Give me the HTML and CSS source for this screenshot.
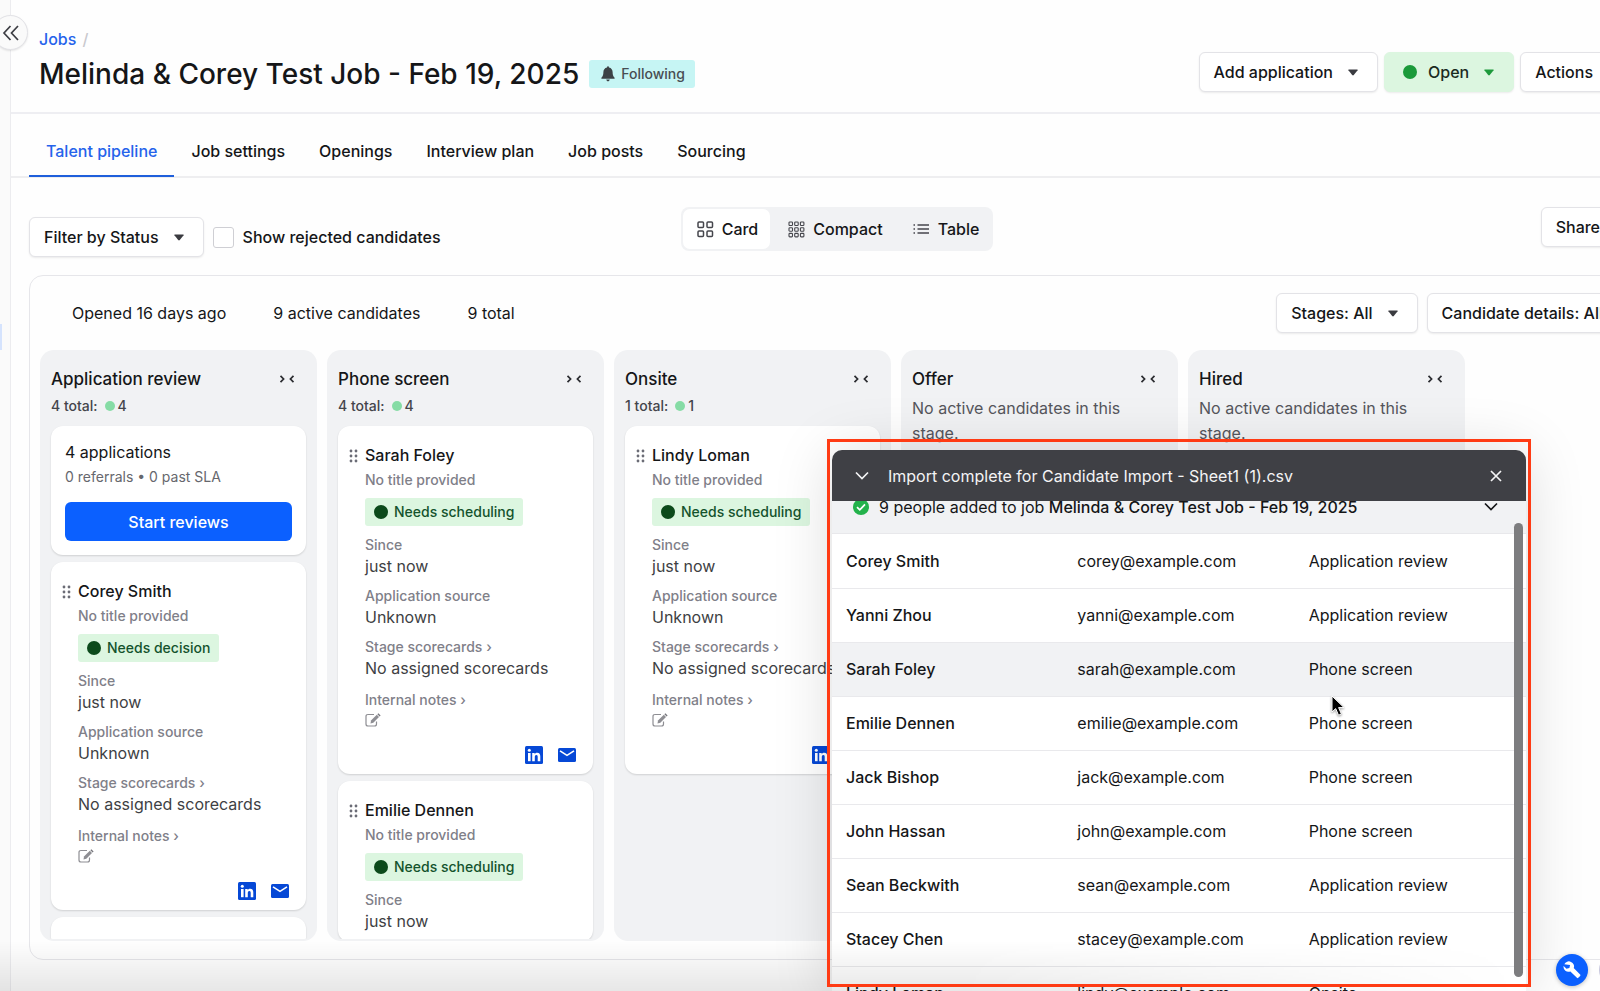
FILE: index.html
```html
<!DOCTYPE html>
<html lang="en">
<head>
<meta charset="utf-8">
<title>Melinda &amp; Corey Test Job - Feb 19, 2025</title>
<link rel="stylesheet" href="styles.css">
</head>
<body>
<svg class="sprite" aria-hidden="true">
  <symbol id="caret" viewBox="0 0 10 7"><path d="M0.8 0.5h8.4q0.8 0 0.4 0.8L5.8 6q-0.8 0.9-1.6 0L0.4 1.3Q0 0.5 0.8 0.5z" fill="currentColor"/></symbol>
  <symbol id="collapse" viewBox="0 0 16 10"><path d="M1.500 1.800L4.600 5L1.500 8.200M14.500 1.800L11.400 5l3.100 3.200" fill="none" stroke="currentColor" stroke-width="1.7"/></symbol>
  <symbol id="grip" viewBox="0 0 9 14"><g fill="currentColor"><circle cx="2" cy="2" r="1.4"/><circle cx="7" cy="2" r="1.4"/><circle cx="2" cy="7" r="1.4"/><circle cx="7" cy="7" r="1.4"/><circle cx="2" cy="12" r="1.4"/><circle cx="7" cy="12" r="1.4"/></g></symbol>
  <symbol id="edit" viewBox="0 0 16 14"><path d="M9 1.5H3Q1 1.5 1 3.500V11q0 2 2 2h6.500q2 0 2-2V8.500" fill="none" stroke="#8e8e93" stroke-width="1.2"/><path d="M5.500 10.500L6 7.600L11.800 1.800L14 4L8.300 9.800z" fill="#8e8e93"/><path d="M12.400 1.200l1-1 2.200 2.200-1 1z" fill="#77777d"/></symbol>
  <symbol id="linkedin" viewBox="0 0 18 18"><rect width="18" height="18" rx="1.5" fill="#0648d6"/><g fill="#fff"><circle cx="4.300" cy="4.200" r="1.500"/><rect x="3" y="7" width="2.600" height="8.200"/><path d="M7.200 7h2.500v1.200C10.300 7.200 11.200 6.800 12.200 6.800c2.300 0 3.100 1.500 3.100 3.700v4.700h-2.600v-4.200c0-1.200-.3-2-1.300-2-1.100 0-1.600.8-1.600 2v4.200H7.200z"/></g></symbol>
  <symbol id="mail" viewBox="0 0 18 14"><rect width="18" height="14" rx="1.5" fill="#0648d6"/><path d="M2 2.800L9 7.300L16 2.800" fill="none" stroke="#fff" stroke-width="1.600"/></symbol>
  <symbol id="chevron" viewBox="0 0 14 9"><path d="M1 1.500L7 7.500L13 1.500" fill="none" stroke="currentColor" stroke-width="1.700"/></symbol>
</svg>

<div class="app">
  <aside class="rail"><span class="rail-active"></span>
    <button class="rail-toggle" aria-label="Collapse sidebar"><svg width="18" height="16" viewBox="0 0 18 16"><path d="M8.500 1L2 8l6.500 7M16 1L9.500 8L16 15" fill="none" stroke="#3c3d43" stroke-width="1.700"/></svg></button>
  </aside>
  <main class="main">
    <header class="page-head">
      <div>
        <nav class="crumbs" aria-label="Breadcrumb"><a href="#">Jobs</a><span>/</span></nav>
        <div class="title-row">
          <h1>Melinda &amp; Corey Test Job - Feb 19, 2025</h1>
          <button class="following"><svg width="14" height="16" viewBox="0 0 14 16"><path d="M7 0.300q1 0 1 1.100c2.400.5 3.600 2.400 3.600 4.600 0 3 .7 4.700 2 5.800v1H0.400v-1C1.700 10.700 2.400 9 2.400 6c0-2.200 1.200-4.100 3.600-4.600q0-1.100 1-1.100zM5.200 13.600h3.600Q8.500 15.400 7 15.400T5.200 13.600z" fill="#3c4246"/></svg>Following</button>
        </div>
      </div>
      <div class="head-actions">
        <button class="btn">Add application<svg class="caret"><use href="#caret"/></svg></button>
        <button class="btn btn-open"><i class="open-dot"></i>Open<svg class="caret"><use href="#caret"/></svg></button>
        <button class="btn">Actions<svg class="caret"><use href="#caret"/></svg></button>
      </div>
    </header>

    <nav class="tabs" aria-label="Job sections">
      <a class="active" href="#">Talent pipeline</a><a href="#">Job settings</a><a href="#">Openings</a><a href="#">Interview plan</a><a href="#">Job posts</a><a href="#">Sourcing</a>
    </nav>

    <div class="toolbar">
      <div class="filters">
        <button class="btn">Filter by Status<svg class="caret"><use href="#caret"/></svg></button>
        <label class="check"><input type="checkbox">Show rejected candidates</label>
      </div>
      <div class="segmented">
        <button class="on"><svg width="17" height="17" viewBox="0 0 17 17"><g fill="none" stroke="currentColor" stroke-width="1.500"><rect x="1" y="1" width="5.500" height="5.500" rx="1"/><rect x="10" y="1" width="5.500" height="5.500" rx="1"/><rect x="1" y="10" width="5.500" height="5.500" rx="1"/><rect x="10" y="10" width="5.500" height="5.500" rx="1"/></g></svg>Card</button>
        <button><svg width="17" height="17" viewBox="0 0 17 17"><g fill="none" stroke="currentColor" stroke-width="1.100"><rect x="1" y="1" width="3.500" height="3.500" rx=".8"/><rect x="6.700" y="1" width="3.500" height="3.500" rx=".8"/><rect x="12.400" y="1" width="3.500" height="3.500" rx=".8"/><rect x="1" y="6.700" width="3.500" height="3.500" rx=".8"/><rect x="6.700" y="6.700" width="3.500" height="3.500" rx=".8"/><rect x="12.400" y="6.700" width="3.500" height="3.500" rx=".8"/><rect x="1" y="12.400" width="3.500" height="3.500" rx=".8"/><rect x="6.700" y="12.400" width="3.500" height="3.500" rx=".8"/><rect x="12.400" y="12.400" width="3.500" height="3.500" rx=".8"/></g></svg>Compact</button>
        <button><svg width="17" height="12" viewBox="0 0 17 12"><path d="M0.500 2h1.500M0.500 6h1.500M0.500 10h1.500M4.500 2H16M4.500 6H16M4.500 10H16" stroke="currentColor" stroke-width="1.500"/></svg>Table</button>
      </div>
      <div class="share"><button class="btn">Share<svg class="caret"><use href="#caret"/></svg></button></div>
    </div>

    <section class="panel">
      <div class="summary">
        <span>Opened 16 days ago</span><span>9 active candidates</span><span>9 total</span>
        <div class="summary-actions">
          <button class="btn">Stages: All<svg class="caret"><use href="#caret"/></svg></button>
          <button class="btn">Candidate details: All<svg class="caret"><use href="#caret"/></svg></button>
        </div>
      </div>
      <div class="board">
        <section class="column">
          <div class="col-head"><h2>Application review</h2><button aria-label="Collapse Application review"><svg><use href="#collapse"/></svg></button></div>
          <p class="count">4 total: <i></i>4</p>
          <article class="card reviews"><h3>4 applications</h3><p>0 referrals • 0 past SLA</p><button>Start reviews</button></article>
          <article class="card">
            <svg class="grip"><use href="#grip"/></svg>
            <div class="card-body">
              <h3>Corey Smith</h3><p class="muted">No title provided</p><span class="status"><i></i>Needs decision</span>
              <dl><dt>Since</dt><dd>just now</dd><dt>Application source</dt><dd>Unknown</dd><dt>Stage scorecards ›</dt><dd>No assigned scorecards</dd><dt class="notes">Internal notes ›</dt><dd class="edit"><button aria-label="Edit notes"><svg><use href="#edit"/></svg></button></dd></dl>
              <div class="links"><a href="#" aria-label="LinkedIn"><svg width="18" height="18"><use href="#linkedin"/></svg></a><a href="#" aria-label="Email"><svg width="18" height="14"><use href="#mail"/></svg></a></div>
            </div>
          </article>
          <article class="card blank"></article>
        </section>
        <section class="column">
          <div class="col-head"><h2>Phone screen</h2><button aria-label="Collapse Phone screen"><svg><use href="#collapse"/></svg></button></div>
          <p class="count">4 total: <i></i>4</p>
          <article class="card">
            <svg class="grip"><use href="#grip"/></svg>
            <div class="card-body">
              <h3>Sarah Foley</h3><p class="muted">No title provided</p><span class="status"><i></i>Needs scheduling</span>
              <dl><dt>Since</dt><dd>just now</dd><dt>Application source</dt><dd>Unknown</dd><dt>Stage scorecards ›</dt><dd>No assigned scorecards</dd><dt class="notes">Internal notes ›</dt><dd class="edit"><button aria-label="Edit notes"><svg><use href="#edit"/></svg></button></dd></dl>
              <div class="links"><a href="#" aria-label="LinkedIn"><svg width="18" height="18"><use href="#linkedin"/></svg></a><a href="#" aria-label="Email"><svg width="18" height="14"><use href="#mail"/></svg></a></div>
            </div>
          </article>
          <article class="card">
            <svg class="grip"><use href="#grip"/></svg>
            <div class="card-body">
              <h3>Emilie Dennen</h3><p class="muted">No title provided</p><span class="status"><i></i>Needs scheduling</span>
              <dl><dt>Since</dt><dd>just now</dd></dl>
            </div>
          </article>
        </section>
        <section class="column">
          <div class="col-head"><h2>Onsite</h2><button aria-label="Collapse Onsite"><svg><use href="#collapse"/></svg></button></div>
          <p class="count">1 total: <i></i>1</p>
          <article class="card">
            <svg class="grip"><use href="#grip"/></svg>
            <div class="card-body">
              <h3>Lindy Loman</h3><p class="muted">No title provided</p><span class="status"><i></i>Needs scheduling</span>
              <dl><dt>Since</dt><dd>just now</dd><dt>Application source</dt><dd>Unknown</dd><dt>Stage scorecards ›</dt><dd>No assigned scorecards</dd><dt class="notes">Internal notes ›</dt><dd class="edit"><button aria-label="Edit notes"><svg><use href="#edit"/></svg></button></dd></dl>
              <div class="links"><a href="#" aria-label="LinkedIn"><svg width="18" height="18"><use href="#linkedin"/></svg></a><a href="#" aria-label="Email"><svg width="18" height="14"><use href="#mail"/></svg></a></div>
            </div>
          </article>
        </section>
        <section class="column">
          <div class="col-head"><h2>Offer</h2><button aria-label="Collapse Offer"><svg><use href="#collapse"/></svg></button></div>
          <p class="empty">No active candidates in this stage.</p>
        </section>
        <section class="column">
          <div class="col-head"><h2>Hired</h2><button aria-label="Collapse Hired"><svg><use href="#collapse"/></svg></button></div>
          <p class="empty">No active candidates in this stage.</p>
        </section>
      </div>
    </section>
  </main>
</div>

<section class="import" aria-label="Import results">
  <header class="import-head">
    <button aria-label="Minimize"><svg width="14" height="9"><use href="#chevron"/></svg></button>
    <h2>Import complete for Candidate Import - Sheet1 (1).csv</h2>
    <button aria-label="Close"><svg width="12" height="12" viewBox="0 0 12 12"><path d="M1 1l10 10M11 1L1 11" stroke="currentColor" stroke-width="1.700"/></svg></button>
  </header>
  <div class="import-list">
    <div class="import-summary">
      <svg width="16" height="16" viewBox="0 0 16 16"><circle cx="8" cy="8" r="8" fill="#23b24b"/><path d="M4 8.200l2.800 2.700L12 5.400" fill="none" stroke="#fff" stroke-width="1.700"/></svg>
      <p>9 people added to job <b>Melinda &amp; Corey Test Job - Feb 19, 2025</b></p>
      <svg width="14" height="9"><use href="#chevron"/></svg>
    </div>
    <table>
      <tr><th scope="row">Corey Smith</th><td>corey@example.com</td><td>Application review</td></tr>
      <tr><th scope="row">Yanni Zhou</th><td>yanni@example.com</td><td>Application review</td></tr>
      <tr class="hover"><th scope="row">Sarah Foley</th><td>sarah@example.com</td><td>Phone screen</td></tr>
      <tr><th scope="row">Emilie Dennen</th><td>emilie@example.com</td><td>Phone screen</td></tr>
      <tr><th scope="row">Jack Bishop</th><td>jack@example.com</td><td>Phone screen</td></tr>
      <tr><th scope="row">John Hassan</th><td>john@example.com</td><td>Phone screen</td></tr>
      <tr><th scope="row">Sean Beckwith</th><td>sean@example.com</td><td>Application review</td></tr>
      <tr><th scope="row">Stacey Chen</th><td>stacey@example.com</td><td>Application review</td></tr>
      <tr><th scope="row">Lindy Loman</th><td>lindy@example.com</td><td>Onsite</td></tr>
    </table>
    <span class="scroll-thumb"></span>
  </div>
</section>
<div class="shade"></div>
<div class="highlight"></div>
<button class="fab" aria-label="Tools"><svg width="18" height="18" viewBox="0 0 18 18"><path d="M1.300 3.200A5 5 0 0 1 8 0.900a4.700 4.700 0 0 1 2.700 6.200l6.400 6.500q.7.700 0 1.400l-1.800 1.800q-.7.700-1.400 0L7.400 10.400A4.900 4.900 0 0 1 .6 5L3.500 7.700 6.400 6.900 7.100 4z" fill="#fff"/></svg></button>
<span class="fab-edge"></span>
<svg class="cursor" width="15" height="22" viewBox="0 0 15 22"><path d="M1 1v16l3.700-3.400 2.800 6.600 2.900-1.200-2.800-6.400H13z" fill="#000" stroke="#fff" stroke-width="1"/></svg>
</body>
</html>
```

FILE: styles.css
```css
* { box-sizing: border-box; }
body {
  margin: 0;
  height: 100vh;
  overflow: hidden;
  position: relative;
  background: #fefefe;
  color: #151618;
  font: 400 16px/24px Inter, "Liberation Sans", sans-serif;
}
h1, h2, h3, p, dl, dd { margin: 0; font-weight: 500; }
p, dd { font-weight: 400; }
button { font: inherit; color: inherit; background: none; border: 0; padding: 0; }
a { color: inherit; text-decoration: none; }
svg { display: block; flex: none; }
.sprite { position: absolute; width: 0; height: 0; }

.app { display: flex; height: 100%; }
.rail { position: relative; flex: none; width: 11px; background: #fafafa; border-right: 1px solid #ececef; }
.rail-active { position: absolute; left: 0; top: 324px; width: 2px; height: 26px; background: #d5e3fd; }
.rail-toggle {
  position: absolute; left: -7px; top: 15px; width: 35px; height: 35px;
  display: flex; align-items: center; justify-content: center;
  background: #fafafa; border: 1px solid #e2e2e6; border-radius: 50%;
  box-shadow: 0 1px 2px #0000001a;
}
/* The content column is wider than the window and runs off its right side. */
.main { flex: none; width: calc(100% + 50px); display: flex; flex-direction: column; }

.page-head { display: flex; justify-content: space-between; height: 114px; padding: 27px 23px 0 28px; border-bottom: 2px solid #eeeef2; }
.crumbs { display: flex; gap: 6px; color: #c9c9ce; font-weight: 500; }
.crumbs a { color: #2563eb; }
.title-row { display: flex; align-items: center; gap: 10px; margin-top: 5px; }
h1 { font-size: 28px; font-weight: 450; line-height: 36px; white-space: nowrap; }
.following { display: flex; align-items: center; gap: 6px; height: 28px; padding: 0 10px 0 12px; border-radius: 3px; background: #c6f5f4; color: #484d52; font-size: 14px; font-weight: 500; }
.head-actions { display: flex; gap: 6px; padding-top: 25px; }
.btn {
  display: flex; align-items: center; gap: 15px; height: 40px; padding: 0 19px 0 14px;
  background: #fff; border: 1px solid #e3e3e7; border-radius: 6px;
  box-shadow: 0 1px 2px #00000014; font-weight: 500; white-space: nowrap;
}
.caret { width: 10px; height: 7px; color: #3a3b40; }
.btn-open { background: #dcf6e0; border-color: #dcf6e0; color: #1b2b1f; padding-left: 18px; }
.btn-open .caret { color: #1e9a3c; }
.open-dot { width: 14px; height: 14px; border-radius: 50%; background: #1b9a3a; margin-right: -4px; }

.tabs { display: flex; flex: none; height: 64px; padding: 12px 18px 0; border-bottom: 2px solid #eeeef0; }
.tabs a { height: 51px; padding: 13px 17px 0; font-weight: 500; }
.tabs .active { color: #2563eb; border-bottom: 2px solid #1f5fdb; }

.toolbar { display: grid; grid-template-columns: 1fr auto 1fr; padding: 29px 16px 0 18px; }
.filters { display: flex; align-items: center; gap: 9px; padding-top: 10px; height: 50px; }
.check { display: flex; align-items: center; gap: 9px; font-weight: 500; }
.check input { appearance: none; width: 21px; height: 21px; margin: 0; border: 1px solid #cfcfd4; border-radius: 3px; background: #fff; }
.segmented { display: flex; height: 44px; padding: 2px; background: #f1f2f4; border-radius: 8px; }
.segmented button { display: flex; align-items: center; gap: 8px; padding: 0 12px 0 14px; border-radius: 7px; font-weight: 500; }
.segmented button + button { padding-left: 18px; }
.segmented .on { background: #fff; }
.segmented svg { color: #45464c; }
.share { display: flex; justify-content: flex-end; }

.panel { flex: 1; min-height: 0; display: flex; flex-direction: column; margin: 18px 12px 31px 18px; padding: 17px 0 18px 10px; border: 1px solid #e6e6ea; border-radius: 14px; }
.summary { display: flex; align-items: center; gap: 47px; padding-left: 32px; height: 40px; }
.summary-actions { display: flex; gap: 9px; margin-left: auto; }
.board { flex: 1; min-height: 0; display: flex; gap: 10px; margin-top: 17px; }
.column { flex: none; width: 277px; padding: 17px 11px 0; border-bottom: 2px solid #f1f2f4; background: #f1f2f4; border-radius: 14px; overflow: hidden; }
.col-head { display: flex; justify-content: space-between; align-items: center; padding-right: 11px; }
.col-head h2 { font-size: 17px; line-height: 24px; }
.col-head svg { width: 16px; height: 10px; color: #2c2d31; }
.count { display: flex; align-items: center; gap: 3px; margin: 5px 0 10px; font-size: 14px; line-height: 20px; font-weight: 500; color: #44454b; }
.count i { width: 10px; height: 10px; margin-left: 4px; border-radius: 50%; background: #86dca5; }
.empty { margin-top: 5px; line-height: 25px; color: #55565c; }

.card { display: flex; gap: 7px; margin-bottom: 7px; padding: 17px 17px 10px 11px; border-radius: 12px; background: #fff; box-shadow: 0 1px 2px #00000024; }
.grip { width: 9px; height: 14px; margin-top: 6px; color: #6b6c76; }
.card-body { flex: 1; min-width: 0; }
.card h3 { font-size: 16px; line-height: 25px; }
.muted, dt { font-size: 14px; font-weight: 500; color: #7f8089; }
.muted { line-height: 24px; }
.status { display: inline-flex; align-items: center; gap: 6px; height: 28px; margin-top: 6px; padding: 0 9px; vertical-align: top; border-radius: 3px; background: #dcf6e0; color: #14532d; font-size: 14px; font-weight: 500; }
.status i { width: 14px; height: 14px; border-radius: 50%; background: #0c4a1b; }
dt { line-height: 20px; margin-top: 9px; }
dd { line-height: 22px; color: #3e3f44; white-space: nowrap; }
dt.notes { margin-top: 11px; }
dd.edit { height: 20px; }
.edit svg { width: 16px; height: 14px; }
.links { display: flex; justify-content: flex-end; align-items: center; gap: 15px; margin-top: 16px; height: 18px; }
.reviews { flex-direction: column; gap: 0; padding: 14px; }
.card.reviews h3 { line-height: 24px; font-weight: 400; }
.reviews p { font-size: 14px; line-height: 26px; color: #66676d; }
.reviews button { height: 39px; margin-top: 12px; border-radius: 6px; background: #0b60ff; color: #fff; font-weight: 500; }
.blank { height: 120px; }

.import { position: absolute; top: 450px; bottom: 0; right: 74px; width: 694px; display: flex; flex-direction: column; border-radius: 10px 10px 0 0; background: #fff; box-shadow: 0 4px 60px #00000026; }
.import-head { display: flex; align-items: center; gap: 19px; height: 51px; padding: 0 24px 0 23px; background: #3f4045; color: #f4f4f5; border-radius: 10px 10px 0 0; }
.import-head h2 { flex: 1; font-size: 16px; font-weight: 400; }
.import-list { position: relative; flex: 1; min-height: 0; overflow: hidden; }
.import-summary { display: flex; align-items: center; gap: 10px; height: 54px; margin-top: -21px; padding: 0 28px 0 21px; background: #f1f2f4; border-bottom: 1px solid #e8e8eb; }
.import-summary p { flex: 1; }
b { font-weight: 500; }
table { width: 100%; table-layout: fixed; border-collapse: collapse; }
th, td { height: 54px; padding: 0 14px; text-align: left; font-weight: 400; border-bottom: 1px solid #e9e9ec; }
th { font-weight: 500; }
.hover { background: #f1f2f4; }
.scroll-thumb { position: absolute; right: 3px; top: 22px; bottom: 14px; width: 9px; border-radius: 5px; background: #7d7d7f; }

.shade { position: absolute; left: 0; right: 0; bottom: 0; height: 50px; pointer-events: none; background: linear-gradient(#0000, #00000017); -webkit-mask-image: linear-gradient(90deg, #000 60%, #0000 95%); mask-image: linear-gradient(90deg, #000 60%, #0000 95%); }
.highlight { position: absolute; top: 439px; bottom: 4px; right: 69px; width: 704px; border: 3px solid #ff3b14; pointer-events: none; }
.fab { position: absolute; right: 12px; bottom: 5px; width: 32px; height: 32px; display: flex; align-items: center; justify-content: center; border-radius: 50%; background: #0b60ff; box-shadow: 0 1px 4px #00000040; }
.fab-edge { position: absolute; right: -31px; bottom: 5px; width: 32px; height: 32px; border-radius: 50%; background: #c8c8de; }
.cursor { position: absolute; left: 1331px; top: 695px; filter: drop-shadow(0 1px 1px #0006); }
```
